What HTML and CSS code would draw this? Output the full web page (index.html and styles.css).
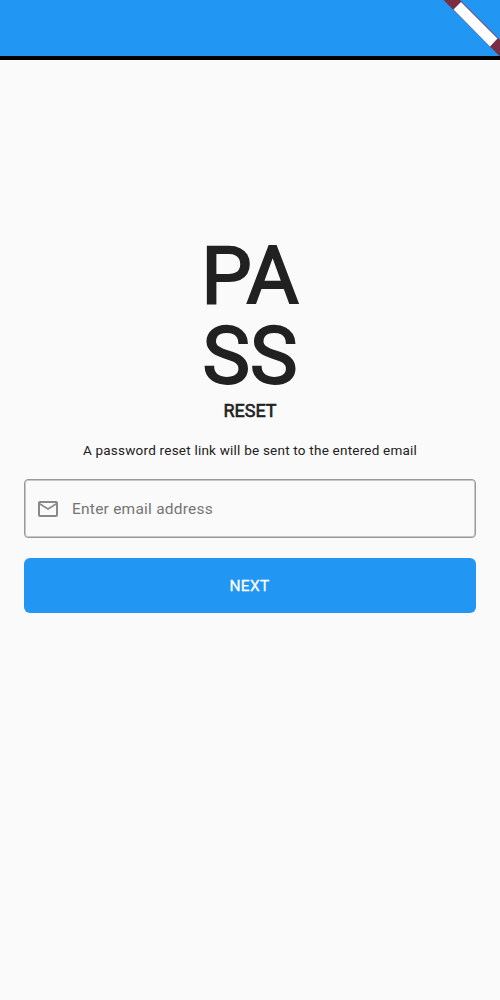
FILE: index.html
```html
<!DOCTYPE html>
<html lang="en">
<head>
<meta charset="utf-8">
<title>Password reset</title>
<link rel="stylesheet" href="styles.css">
</head>
<body>
<header class="app-bar">
<svg class="banner" width="60" height="56" viewBox="0 0 60 56" aria-hidden="true">
<path class="ribbon" d="M3.500 0H20L60 40V56.500Z"/>
<path class="ribbon-label" d="M13.500 9.500L21 2L57.500 38.500L50 46.500Z"/>
</svg>
</header>
<main class="content">
<h1 class="title"><span>PA</span><span>SS</span></h1>
<h2 class="subtitle">RESET</h2>
<p class="hint">A password reset link will be sent to the entered email</p>
<label class="field">
<svg class="mail" width="24" height="24" viewBox="0 0 24 24" aria-hidden="true"><path d="M22 6c0-1.100-.9-2-2-2H4c-1.100 0-2 .9-2 2v12c0 1.100.9 2 2 2h16c1.100 0 2-.9 2-2V6zm-2 0l-8 5-8-5h16zm0 12H4V8l8 5 8-5v10z"/></svg>
<input class="input" type="email" placeholder="Enter email address">
</label>
<button class="next" type="button">NEXT</button>
</main>
</body>
</html>
```
FILE: styles.css
```css
* { box-sizing: border-box; }
body { margin: 0; height: 1000px; overflow: hidden; background: #fafafa; color: #212121; font-family: Roboto, sans-serif; }
.app-bar { position: relative; height: 60px; background: #2196f3; border-bottom: 4px solid #000; }
.banner { position: absolute; top: 0; right: 0; }
.ribbon { fill: #7b2d43; }
.ribbon-label { fill: #fff; }
.content { display: flex; flex-direction: column; padding: 176px 24px 0; text-align: center; }
.title { display: flex; flex-direction: column; margin: 0; font-size: 80px; font-weight: 400; line-height: 80px; -webkit-text-stroke: 2px #212121; }
.subtitle { margin: 4px 0 0; font-size: 18px; font-weight: 400; line-height: 22px; -webkit-text-stroke: .6px #212121; }
.hint { margin: 18px 0 0; font-size: 13.5px; line-height: 20px; letter-spacing: .22px; }
.field { display: flex; align-items: center; height: 59px; margin-top: 19px; padding: 0 11px; gap: 12px; border: 1px solid #999; border-radius: 4px; box-shadow: inset 0 0 0 1px #c8c8c8; }
.mail { fill: #898989; flex: none; }
.input { flex: 1; min-width: 0; padding: 0; border: 0; outline: 0; background: none; color: #212121; font: 400 15.5px/20px Roboto, sans-serif; letter-spacing: .23px; }
.input::placeholder { color: #757575; opacity: 1; }
.next { height: 55px; margin-top: 20px; padding: 0 1px 0 0; border: 0; border-radius: 6px; background: #2196f3; color: #fff; font: 400 15.5px/20px Roboto, sans-serif; letter-spacing: .3px; -webkit-text-stroke: .3px #fff; }
```
